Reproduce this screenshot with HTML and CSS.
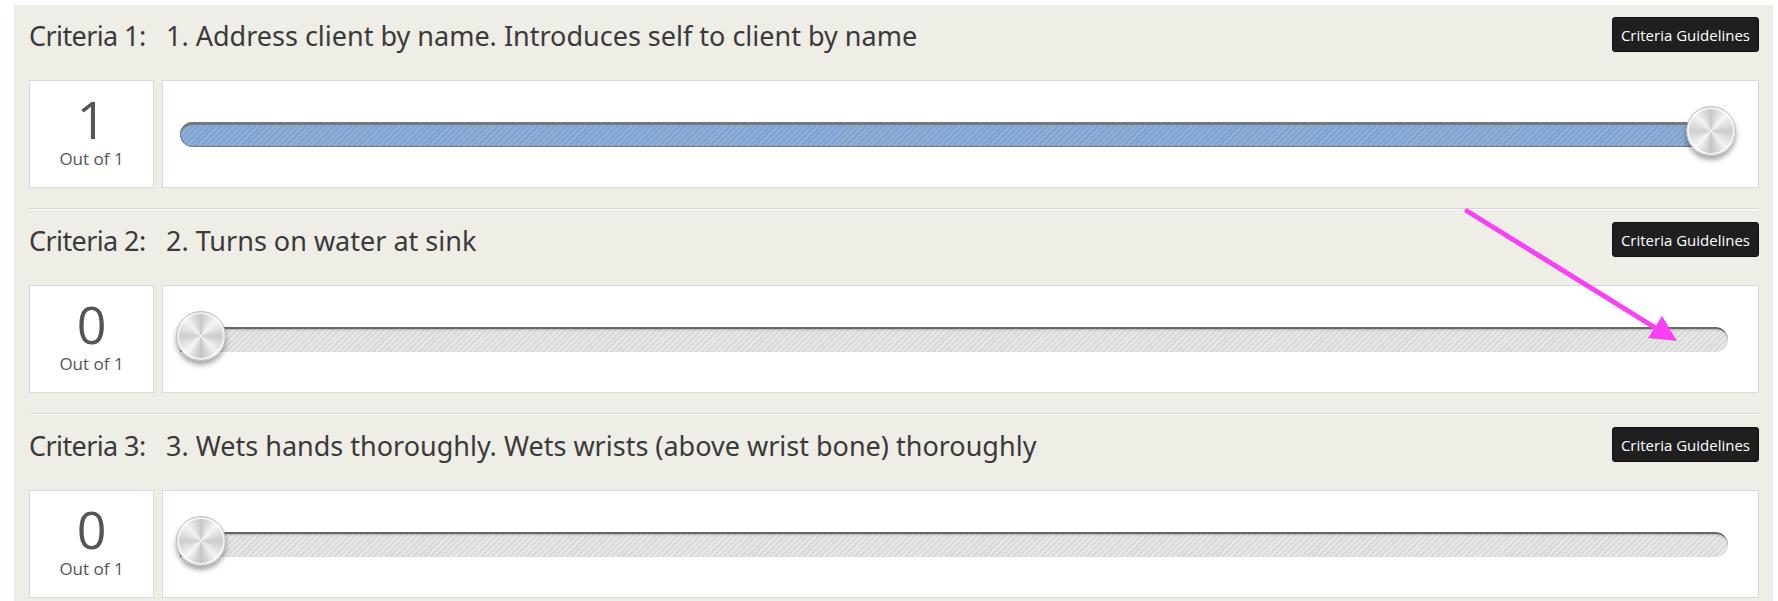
FILE: index.html
```html
<!DOCTYPE html>
<html lang="en">

<head>
    <meta charset="UTF-8">
    <meta name="viewport" content="width=device-width, initial-scale=1.0">
    <title>Skill Evaluation</title>
    <link rel="stylesheet" href="styles.css">
</head>

<body>
    <div class="page">
        <section class="criteria">
            <div class="criteria-head">
                <h2 class="criteria-title"><span class="criteria-label">Criteria 1:</span>1. Address client by name. Introduces self to client by name</h2>
                <button class="guidelines-btn">Criteria Guidelines</button>
            </div>
            <div class="criteria-body">
                <div class="score">
                    <div class="score-value">1</div>
                    <div class="score-max">Out of 1</div>
                </div>
                <div class="slider-card">
                    <div class="slider" style="--value: 1">
                        <div class="slider-fill"></div>
                        <div class="slider-knob"></div>
                    </div>
                </div>
            </div>
        </section>

        <section class="criteria">
            <div class="criteria-head">
                <h2 class="criteria-title"><span class="criteria-label">Criteria 2:</span>2. Turns on water at sink</h2>
                <button class="guidelines-btn">Criteria Guidelines</button>
            </div>
            <div class="criteria-body">
                <div class="score">
                    <div class="score-value">0</div>
                    <div class="score-max">Out of 1</div>
                </div>
                <div class="slider-card">
                    <div class="slider" style="--value: 0">
                        <div class="slider-fill"></div>
                        <div class="slider-knob"></div>
                    </div>
                </div>
            </div>
        </section>

        <section class="criteria">
            <div class="criteria-head">
                <h2 class="criteria-title"><span class="criteria-label">Criteria 3:</span>3. Wets hands thoroughly. Wets wrists (above wrist bone) thoroughly</h2>
                <button class="guidelines-btn">Criteria Guidelines</button>
            </div>
            <div class="criteria-body">
                <div class="score">
                    <div class="score-value">0</div>
                    <div class="score-max">Out of 1</div>
                </div>
                <div class="slider-card">
                    <div class="slider" style="--value: 0">
                        <div class="slider-fill"></div>
                        <div class="slider-knob"></div>
                    </div>
                </div>
            </div>
        </section>

        <!-- annotation arrow drawn over the page -->
        <svg class="annotation" width="1759" height="596" viewBox="0 0 1759 596">
            <line x1="1453" y1="206" x2="1640" y2="322" stroke="#f940f5" stroke-width="5" stroke-linecap="round" />
            <polygon points="1663,336 1634,333 1648,311" fill="#f940f5" />
        </svg>
    </div>
</body>

</html>
```

FILE: styles.css
```css
body {
    margin: 0;
    background: #fff;
    font-family: "Open Sans", "Noto Sans", sans-serif;
    color: #333;
}

.page {
    position: relative;
    margin: 5px 5px 0 14px;
    padding: 0 14px 0 15px;
    background: #eeede6;
    height: 596px;
    overflow: hidden;
}

.criteria {
    padding: 13px 0 20px;
    border-top: 1px solid #d8d8d2;
    box-shadow: inset 0 1px 0 #fff;
}

.criteria:first-child {
    padding-top: 12px;
    border-top: none;
    box-shadow: none;
}

.criteria-head {
    display: flex;
    align-items: center;
    justify-content: space-between;
    height: 35px;
    margin-bottom: 28px;
}

.criteria-title {
    margin: 0;
    padding-top: 2px;
    font-family: "Noto Sans", sans-serif;
    font-size: 27px;
    line-height: 35px;
    font-weight: 400;
    color: #3a3a3a;
    white-space: nowrap;
}

.criteria-label {
    display: inline-block;
    width: 137px;
    letter-spacing: -0.6px;
}

.guidelines-btn {
    height: 35px;
    padding: 0 8px;
    border: 1px solid #111;
    border-radius: 3px;
    background: #1f1f1f;
    color: #fff;
    font-family: "Open Sans", sans-serif;
    font-size: 15px;
}

.criteria-body {
    display: flex;
    gap: 8px;
    height: 108px;
}

.score {
    box-sizing: border-box;
    width: 125px;
    padding-top: 14px;
    border: 1px solid #d9d9d9;
    background: #fff;
    text-align: center;
    color: #555;
}

.score-value {
    font-size: 52px;
    line-height: 48px;
}

.score-max {
    margin-top: 5px;
    font-size: 17px;
    line-height: 21px;
}

.slider-card {
    flex: 1;
    display: flex;
    align-items: center;
    padding: 0 30px 0 17px;
    border: 1px solid #d9d9d9;
    background: #fff;
}

.slider {
    position: relative;
    flex: 1;
    box-sizing: border-box;
    height: 25px;
    border-top: 2px solid #666;
    border-radius: 13px;
    background: repeating-linear-gradient(135deg, #dadada 0 2px, #e7e7e7 2px 4px);
    box-shadow: inset 0 1px 2px rgba(0, 0, 0, 0.2);
}

.slider-fill {
    position: absolute;
    top: -2px;
    left: 0;
    bottom: 0;
    box-sizing: border-box;
    width: calc(var(--value) * 100%);
    border: 1px solid #777;
    border-top-width: 3px;
    border-radius: 13px;
    background: repeating-linear-gradient(135deg, #76a4e0 0 2px, #98adc8 2px 4px);
}

.slider-knob {
    position: absolute;
    top: -18px;
    left: calc(-4px + var(--value) * (100% - 38px));
    box-sizing: border-box;
    width: 50px;
    height: 50px;
    border: 1px solid #bcbcbc;
    border-radius: 50%;
    background: conic-gradient(#c8c8c8, #f6f6f6 12%, #cccccc 25%, #f2f2f2 38%, #c4c4c4 50%, #f6f6f6 62%, #cfcfcf 75%, #f3f3f3 88%, #c8c8c8);
    box-shadow: inset 0 0 0 2px rgba(255, 255, 255, 0.7), 0 4px 5px rgba(0, 0, 0, 0.35);
}

.annotation {
    position: absolute;
    top: 0;
    left: 0;
    pointer-events: none;
}
```
